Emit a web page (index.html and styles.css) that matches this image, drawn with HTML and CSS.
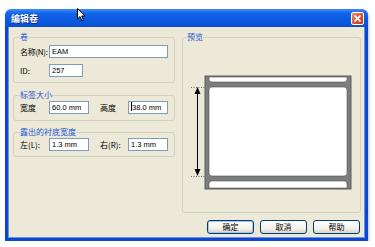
FILE: index.html
```html
<!DOCTYPE html>
<html>
<head>
    <meta charset="UTF-8">
    <meta name="viewport" content="width=device-width">
    <title>编辑卷</title>
    <link rel="stylesheet" href="styles.css">
</head>
<body>
<div class="window">
    <div class="titlebar">
        <span class="title">编辑卷</span>
        <span class="close">
            <svg width="7" height="7" viewBox="0 0 7 7"><path d="M0.5 0.5L6.5 6.5M6.5 0.5L0.5 6.5" stroke="#fff" stroke-width="1.6"/></svg>
        </span>
    </div>
    <div class="client">
        <div class="main">
            <div class="leftCol">
                <fieldset class="group g1">
                    <legend>卷</legend>
                    <div class="grid">
                        <label class="tight">名称(N):</label>
                        <span class="field wide">EAM</span>
                        <label class="r2">ID:</label>
                        <span class="field short r2">257</span>
                    </div>
                </fieldset>
                <fieldset class="group g2">
                    <legend>标签大小</legend>
                    <div class="grid">
                        <label>宽度</label>
                        <span class="field">60.0 mm</span>
                        <span></span>
                        <label>高度</label>
                        <span class="field"><i class="caret"></i>38.0 mm</span>
                    </div>
                </fieldset>
                <fieldset class="group g3">
                    <legend>露出的衬底宽度</legend>
                    <div class="grid">
                        <label>左(L):</label>
                        <span class="field">1.3 mm</span>
                        <span></span>
                        <label>右(R):</label>
                        <span class="field">1.3 mm</span>
                    </div>
                </fieldset>
            </div>
            <fieldset class="group preview">
                <legend>预览</legend>
                <svg class="drawing" width="177" height="168" viewBox="0 0 177 168">
                    <!-- liner strip -->
                    <rect x="22" y="34" width="146" height="113" fill="#7d7d7d" stroke="#5e5e5e" stroke-width="1"/>
                    <!-- previous label -->
                    <path d="M26 35 H164 V37 Q164 40 161 40 H29 Q26 40 26 37 Z" fill="#fff" stroke="#555" stroke-width="0.6"/>
                    <!-- current label -->
                    <rect x="26" y="45" width="138" height="89" rx="3" fill="#fff" stroke="#555" stroke-width="0.6"/>
                    <!-- next label -->
                    <path d="M26 146 V142 Q26 139 29 139 H161 Q164 139 164 142 V146 Z" fill="#fff" stroke="#555" stroke-width="0.6"/>
                    <!-- dimension -->
                    <path d="M8 45.5 H23 M8 134.5 H23" stroke="#666" stroke-width="1" stroke-dasharray="1 1.5"/>
                    <path d="M14.5 50 V129" stroke="#000" stroke-width="1"/>
                    <path d="M14.5 45 L11.5 52 H17.5 Z M14.5 134 L11.5 127 H17.5 Z" fill="#000"/>
                </svg>
            </fieldset>
        </div>
        <div class="buttons">
            <button class="btn default">确定</button>
            <button class="btn">取消</button>
            <button class="btn">帮助</button>
        </div>
    </div>
</div>
<svg class="cursor" width="9" height="14" viewBox="0 0 9 14">
    <path d="M0.5 0.5 V11 L3 8.6 L5 13 L6.6 12.3 L4.7 8 H8 Z" fill="#fff" stroke="#000" stroke-width="1"/>
</svg>
</body>
</html>
```

FILE: styles.css
```css
/* XP style dialog */

body {
    margin: 0;
    padding: 0;
    background: #ffffff;
    font-family: "Noto Sans CJK SC", "Liberation Sans", sans-serif;
    font-size: 8px;
    color: #000;
}

.window {
    width: 363px;
    height: 232px;
    margin: 9px 0 0 5px;
    display: flex;
    flex-direction: column;
    box-shadow: 1px 2px 3px rgba(0,0,0,0.25);
    border-radius: 6px 6px 0 0;
}

.titlebar {
    height: 18px;
    display: flex;
    align-items: center;
    justify-content: space-between;
    padding: 0 4px 0 6px;
    border-radius: 6px 6px 0 0;
    background: linear-gradient(#3f8cf7, #1263e8 25%, #0a58e0 70%, #0b4fd0);
}

.title {
    color: #fff;
    font-weight: 700;
    font-size: 9px;
    text-shadow: 1px 1px 0 #0a2d8c;
}

.close {
    width: 13px;
    height: 13px;
    box-sizing: border-box;
    border: 1px solid #fff;
    border-radius: 2px;
    background: linear-gradient(135deg, #f08a6c, #e0532e 55%, #c53a1a);
    display: flex;
    align-items: center;
    justify-content: center;
}

.client {
    flex: 1;
    background: #ece9d8;
    border: 3px solid #0b48d2;
    border-top: none;
    box-shadow: inset 1px 0 0 #6b8fe6, inset -1px 0 0 #6b8fe6, inset 0 -1px 0 #6b8fe6;
    padding: 5px 4px 4px 5px;
    display: flex;
    flex-direction: column;
}

.main {
    display: flex;
    gap: 7px;
    height: 181px;
}

.leftCol {
    width: 162px;
    display: flex;
    flex-direction: column;
}

.group {
    margin: 0;
    border: 1px solid #d3d0c0;
    border-radius: 3px;
    padding: 0 6px;
    min-width: 0;
}

.group legend {
    color: #1d55d4;
    padding: 0;
    line-height: 10px;
    height: 10px;
}

.g1 { padding-top: 3px; padding-bottom: 5px; }
.g2 { margin-top: 7px; padding-top: 1px; padding-bottom: 6px; }
.g3 { margin-top: 6px; padding-top: 1px; padding-bottom: 5px; }

.grid {
    display: grid;
    grid-template-columns: 29px 40px 11px 28px 40px;
    align-items: center;
    row-gap: 6px;
}

.grid label {
    white-space: nowrap;
    line-height: 13px;
}

.grid label.tight {
    letter-spacing: -0.3px;
}

.field {
    height: 13px;
    box-sizing: border-box;
    border: 1px solid #7f9db9;
    background: #fff;
    padding: 0 2px;
    font-family: "Liberation Sans", sans-serif;
    font-size: 7.5px;
    line-height: 11px;
    white-space: nowrap;
    overflow: hidden;
}

.field.wide {
    grid-column: 2 / 6;
}

.field.short {
    width: 34px;
}

.r2 {
    grid-row: 2;
}

.caret {
    display: inline-block;
    width: 1px;
    height: 9px;
    background: #000;
    vertical-align: -1px;
}

.preview {
    width: 179px;
    box-sizing: border-box;
    padding: 0;
}

.preview legend {
    margin-left: 4px;
}

.drawing {
    display: block;
}

.buttons {
    display: flex;
    justify-content: flex-end;
    gap: 6px;
    margin-top: 7px;
    padding-right: 1px;
}

.btn {
    width: 47px;
    height: 14px;
    padding: 0;
    font-family: "Noto Sans CJK SC", sans-serif;
    font-size: 8px;
    line-height: 12px;
    color: #000;
    border: 1px solid #003c74;
    border-radius: 3px;
    background: linear-gradient(#ffffff, #f3f2ec 60%, #d8d4c8);
}

.btn.default {
    box-shadow: inset 0 0 0 1px #a8c2f0;
}

.cursor {
    position: absolute;
    left: 77px;
    top: 8px;
}
```
